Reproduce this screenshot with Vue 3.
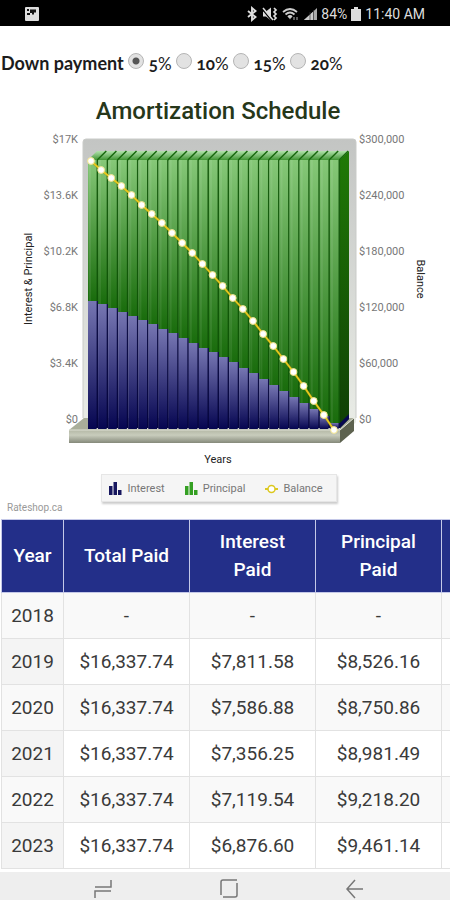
<script setup>
    import { ref, computed } from 'vue';

    const downPayment = ref('5');
    const options = ['5', '10', '15', '20'];

    const rows = [
        ['2018', '-', '-', '-'],
        ['2019', '$16,337.74', '$7,811.58', '$8,526.16'],
        ['2020', '$16,337.74', '$7,586.88', '$8,750.86'],
        ['2021', '$16,337.74', '$7,356.25', '$8,981.49'],
        ['2022', '$16,337.74', '$7,119.54', '$9,218.20'],
        ['2023', '$16,337.74', '$6,876.60', '$9,461.14']
    ];

    const leftTicks = ['$17K', '$13.6K', '$10.2K', '$6.8K', '$3.4K', '$0'];
    const rightTicks = ['$300,000', '$240,000', '$180,000', '$120,000', '$60,000', '$0'];

    // chart geometry, in viewBox units
    const base = 299;
    const top = 30;
    const step = 10.08;
    const interestTops = [171, 174, 178, 182, 186, 190, 194, 199, 203, 208, 213, 218, 222, 227, 232, 238, 243, 249, 255, 261, 267, 273, 279, 286, 293];
    const balance = [31, 40, 48, 56, 65, 75, 84, 93, 103, 113, 123, 134, 145, 156, 168, 179, 191, 204, 216, 229, 242, 256, 271, 285, 300];

    const bars = computed(() => interestTops.map((y, i) => {
        return {x:88 + i * step, y};
    }));
    const points = computed(() => balance.map((y, i) => {
        return {x:91 + i * 10.125, y};
    }));
    const line = computed(() => points.value.map(p => p.x + ',' + p.y).join(' '));
</script>

<template>
    <div class="screen">
        <header class="status">
            <svg class="photo" width="14" height="14" viewBox="0 0 14 14">
                <rect width="14" height="14" rx="1" fill="#ddd"/>
                <path d="M2 2h2v2H2zM5 2.500h6v3H9v2H7V6H5v2H2V6h3z" fill="#111"/>
            </svg>
            <div class="icons">
                <svg width="12" height="16" viewBox="0 0 12 16">
                    <path d="M2 5L9.500 11L6 14V2L9.500 5L2 11" fill="none" stroke="#ddd" stroke-width="1.900"/>
                </svg>
                <svg width="16" height="16" viewBox="0 0 16 16">
                    <path d="M1 5.500h3l5-4v13l-5-4H1z" fill="#ddd"/>
                    <path d="M1 4l9 11" stroke="#000" stroke-width="1.300"/>
                    <path d="M1 2l10 12" stroke="#ddd" stroke-width="1.500"/>
                    <path d="M12 2l2 2-2 2 2 2-2 2 2 2-2 2" fill="none" stroke="#ddd" stroke-width="1.700"/>
                </svg>
                <svg width="18" height="16" viewBox="0 0 18 16">
                    <path d="M1 6q7-6 14 0M3.500 8.500q4.500-4 9 0M6 11q2-2 4 0" fill="none" stroke="#ccc" stroke-width="1.800"/>
                    <path d="M6.500 11h3l-1.500 2.500z" fill="#ccc"/>
                    <path d="M12 11v3M15 11v3" stroke="#777" stroke-width="1.500"/>
                </svg>
                <svg width="13" height="16" viewBox="0 0 13 16">
                    <path d="M0 14L13 2V14z" fill="#aaa"/>
                    <path d="M0 14L9 6V14z" fill="#ccc"/>
                    <path d="M6 6v8M9.500 4v10" stroke="#333" stroke-width="0.700"/>
                </svg>
                <span class="battery-text">84%</span>
                <svg width="10" height="16" viewBox="0 0 10 16">
                    <path d="M3 1h4v2h3v12H0V3h3z" fill="#ddd"/>
                </svg>
                <span class="clock">11:40 AM</span>
            </div>
        </header>

        <main class="content">
            <div class="down" role="radiogroup" aria-labelledby="down-label">
                <span id="down-label">Down payment</span>
                <label v-for="item in options" :key="item">
                    <input v-model="downPayment" type="radio" name="down" :value="item">
                    <span>{{ item }}<span class="percent">%</span></span>
                </label>
            </div>

            <h1>Amortization Schedule</h1>

            <svg class="chart" viewBox="0 0 450 338" role="img" aria-label="Amortization Schedule">
                <defs>
                    <linearGradient id="green" x1="0" y1="0" x2="0" y2="1">
                        <stop offset="0" stop-color="#86c878"/>
                        <stop offset="1" stop-color="#196c0c"/>
                    </linearGradient>
                    <linearGradient id="blue" x1="0" y1="0" x2="0" y2="1">
                        <stop offset="0" stop-color="#7676b2"/>
                        <stop offset="1" stop-color="#050550"/>
                    </linearGradient>
                    <linearGradient id="cap" x1="0" y1="0" x2="0" y2="1">
                        <stop offset="0" stop-color="#b4e3ae"/>
                        <stop offset="1" stop-color="#3f9433"/>
                    </linearGradient>
                    <linearGradient id="side" x1="0" y1="0" x2="0" y2="1">
                        <stop offset="0" stop-color="#1f7a06"/>
                        <stop offset="1" stop-color="#103f05"/>
                    </linearGradient>
                    <linearGradient id="wall" x1="0" y1="0" x2="0" y2="1">
                        <stop offset="0" stop-color="#c3c5c3"/>
                        <stop offset="1" stop-color="#e9ece6"/>
                    </linearGradient>
                    <linearGradient id="floor" x1="0" y1="0" x2="0" y2="1">
                        <stop offset="0" stop-color="#b4b8a6"/>
                        <stop offset="0.400" stop-color="#c8ccbc"/>
                        <stop offset="1" stop-color="#85897a"/>
                    </linearGradient>
                </defs>

                <rect x="83" y="9" width="273" height="285" rx="3" fill="url(#wall)"/>
                <path d="M83 288V12q0-3 3-3H353q3 0 3 3V288" fill="none" stroke="#c9cbc8"/>
                <path d="M69 300L84 288H354L340 300z" fill="#a9ae9a"/>
                <rect x="69" y="300" width="271" height="13" fill="url(#floor)"/>
                <path d="M340 300L354 288V301L340 313z" fill="#5d624f"/>
                <path d="M69 300H340L354 288" fill="none" stroke="#dfe2d6"/>

                <path d="M339 30L349 21V289L339 299z" fill="url(#side)"/>
                <path d="M339 294L349 284V289L339 299z" fill="#080850"/>
                <g v-for="bar in bars" :key="bar.x">
                    <path :d="`M${bar.x} 30l9 -9h10l-9 9z`" fill="url(#cap)"/>
                    <rect :x="bar.x" :y="top" :width="step" :height="bar.y - top" fill="url(#green)"/>
                    <rect :x="bar.x" :y="bar.y" :width="step" :height="base - bar.y" fill="url(#blue)"/>
                    <rect :x="bar.x + 1" :y="top" width="2" :height="bar.y - top" fill="#fff" opacity="0.080"/>
                    <rect :x="bar.x + 8.600" :y="top" width="1.500" :height="bar.y - top" fill="#0d5205" opacity="0.900"/>
                    <rect :x="bar.x + 8.600" :y="bar.y" width="1.500" :height="base - bar.y" fill="#04043c" opacity="0.900"/>
                    <rect :x="bar.x + 8.600" y="298" width="1.500" height="1.500" fill="#d5d8d0"/>
                </g>
                <path v-for="bar in bars" :key="bar.x" :d="`M${bar.x + 9.300} 30l9 -9`" stroke="#17680d" stroke-width="1.500"/>

                <polyline :points="line" fill="none" stroke="#8a8a10" stroke-width="2.800" opacity="0.500"/>
                <polyline :points="line" fill="none" stroke="#e8c81c" stroke-width="1.800"/>
                <circle v-for="p in points" :key="p.x" :cx="p.x" :cy="p.y" r="3.400" fill="#fff" stroke="#f3e48a" stroke-width="1"/>

                <g class="ticks">
                    <text v-for="(tick, i) in leftTicks" :key="tick" x="78" :y="13 + i * 56" text-anchor="end">{{ tick }}</text>
                    <text v-for="(tick, i) in rightTicks" :key="tick" x="359" :y="13 + i * 56">{{ tick }}</text>
                </g>
                <g class="names" text-anchor="middle">
                    <text transform="translate(32 149) rotate(-90)">Interest &amp; Principal</text>
                    <text transform="translate(417 149) rotate(90)">Balance</text>
                    <text x="218" y="333">Years</text>
                </g>
            </svg>

            <div class="legend-row">
                <div class="legend">
                    <span class="entry">
                        <svg width="13" height="13" viewBox="0 0 13 13">
                            <path d="M0 4h3.500v9H0zM4.500 0h3.500v13h-3.500zM9 8h3.500v5H9z" fill="#16165e"/>
                        </svg>
                        Interest
                    </span>
                    <span class="entry">
                        <svg width="13" height="13" viewBox="0 0 13 13">
                            <path d="M0 4h3.500v9H0zM4.500 0h3.500v13h-3.500zM9 8h3.500v5H9z" fill="#35a023"/>
                        </svg>
                        Principal
                    </span>
                    <span class="entry">
                        <svg width="13" height="13" viewBox="0 0 13 13">
                            <path d="M0 7h13" stroke="#dcc820" stroke-width="2"/>
                            <circle cx="6.500" cy="7" r="3.500" fill="#fff" stroke="#dcc820" stroke-width="1.500"/>
                        </svg>
                        Balance
                    </span>
                </div>
            </div>
            <p class="credit">Rateshop.ca</p>

            <table>
                <thead>
                    <tr>
                        <th class="year">Year</th>
                        <th>Total Paid</th>
                        <th>Interest Paid</th>
                        <th>Principal Paid</th>
                        <th></th>
                    </tr>
                </thead>
                <tbody>
                    <tr v-for="row in rows" :key="row[0]">
                        <td v-for="cell, index in row" :key="index">{{ cell }}</td>
                        <td></td>
                    </tr>
                </tbody>
            </table>
        </main>

        <nav class="keys">
            <button type="button" aria-label="Recent apps">
                <svg width="18" height="20" viewBox="0 0 18 20">
                    <path d="M17 1V8H1M1 19V12H17" fill="none" stroke="#777" stroke-width="1.500"/>
                </svg>
            </button>
            <button type="button" aria-label="Home">
                <svg width="18" height="20" viewBox="0 0 18 20">
                    <path d="M1 16V3q0-2 2-2H17M17 4V16q0 2-2 2H3" fill="none" stroke="#777" stroke-width="1.500"/>
                </svg>
            </button>
            <button type="button" aria-label="Back">
                <svg width="18" height="20" viewBox="0 0 18 20">
                    <path d="M9 1L1 10L9 19M1 10H17" fill="none" stroke="#777" stroke-width="1.500"/>
                </svg>
            </button>
        </nav>
    </div>
</template>

<style>
    body {
        background: #fff;
    }
</style>

<style scoped>
    .screen {
        display: flex;
        flex-direction: column;
        height: 100vh;
        overflow: hidden;
        font-family: Roboto, "Liberation Sans", sans-serif;
        color: #3a3a3a;
    }

    .status {
        display: flex;
        flex: none;
        align-items: center;
        justify-content: space-between;
        height: 26px;
        padding: 2px 25px 0;
        box-sizing: border-box;
        background: #000;
        color: #ddd;
        font-size: 14px;
    }

    .icons {
        display: flex;
        align-items: center;
        gap: 4px;
        line-height: 24px;
    }

    .content {
        flex: 1;
        min-height: 0;
        overflow: hidden;
    }

    .down {
        display: flex;
        align-items: center;
        gap: 4px;
        height: 36px;
        padding: 19px 0 15px 1px;
        font-family: Lato, "Open Sans", sans-serif;
        font-size: 18px;
        font-weight: 700;
        font-variant-numeric: oldstyle-nums;
        color: #1c1c1c;
    }

    .down label {
        display: flex;
        align-items: center;
        gap: 5px;
        font-size: 17px;
    }

    .down .percent {
        font-weight: 400;
    }

    .down input {
        appearance: none;
        width: 16px;
        height: 16px;
        margin: 0 0 4px;
        border: 1px solid #b5b5b5;
        border-radius: 50%;
        background: #e2e2e2;
    }

    .down input:checked {
        background: radial-gradient(circle, #555 0 3px, #e2e2e2 4px);
    }

    h1 {
        margin: 0;
        height: 34px;
        line-height: 30px;
        text-align: center;
        font-size: 24px;
        font-weight: 500;
        color: #26371a;
        padding-right: 14px;
    }

    .chart {
        display: block;
        width: 100%;
    }

    .ticks text {
        font-size: 11px;
        fill: #777;
    }

    .names text {
        font-size: 11px;
        fill: #222;
    }

    .legend-row {
        display: flex;
        justify-content: center;
        padding: 6px 12px 0 0;
    }

    .legend {
        display: flex;
        align-items: center;
        gap: 20px;
        height: 28px;
        padding: 0 13px 0 7px;
        box-sizing: border-box;
        background: #f5f5f5;
        border: 1px solid #e6e6e6;
        box-shadow: 1px 2px 2px #ccc;
        font-size: 11px;
        color: #777;
    }

    .entry {
        display: flex;
        align-items: center;
        gap: 5px;
    }

    .credit {
        margin: 0 0 5px 7px;
        line-height: 12px;
        font-size: 10px;
        color: #999;
    }

    table {
        width: 567px;
        margin-left: 1px;
        table-layout: fixed;
        border-collapse: collapse;
        font-size: 19px;
        text-align: center;
    }

    th {
        height: 73px;
        padding: 0 15px;
        box-sizing: border-box;
        border: 1px solid #c4c8e8;
        background: #232f89;
        color: #fff;
        font-size: 19px;
        font-weight: 500;
        line-height: 28px;
    }

    .year {
        width: 62px;
        padding: 0;
    }

    td {
        height: 46px;
        padding: 0;
        box-sizing: border-box;
        border: 1px solid #e2e2e2;
    }

    tbody tr:nth-child(odd) td {
        background: #f9f9f9;
    }

    tbody td:first-child {
        background: #f4f4f4;
    }

    .keys {
        display: flex;
        flex: none;
        align-items: center;
        justify-content: space-between;
        height: 28px;
        padding: 6px 86px 0 94px;
        box-sizing: border-box;
        background: #eee;
    }

    .keys button {
        display: flex;
        padding: 0;
        border: none;
        background: transparent;
    }
</style>
